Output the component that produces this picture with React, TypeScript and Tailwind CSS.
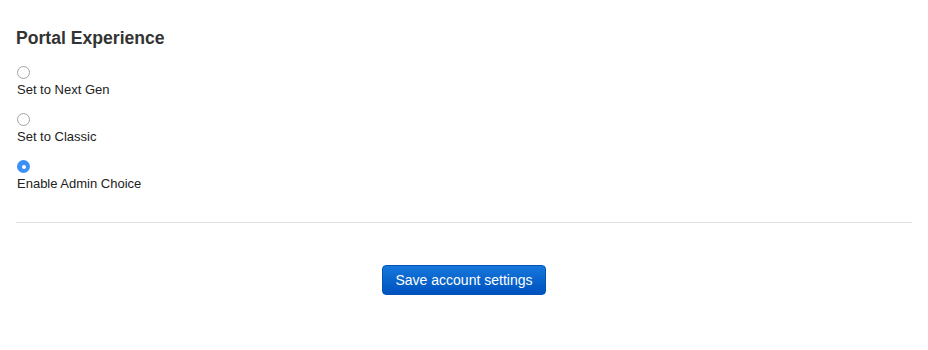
import React from "react";

function Radio({ checked }: { checked?: boolean }) {
  if (checked) {
    return (
      <div className="flex h-[13px] w-[13px] items-center justify-center rounded-full bg-[#3b8ff6]">
        <div className="h-[4px] w-[4px] rounded-full bg-white" />
      </div>
    );
  }
  return <div className="h-[13px] w-[13px] rounded-full border border-[#a3a3a3] bg-white" />;
}

const items = [
  { label: "Set to Next Gen", checked: false },
  { label: "Set to Classic", checked: false },
  { label: "Enable Admin Choice", checked: true },
];

export default function App() {
  return (
    <div
      className="h-[350px] w-[928px] bg-white px-4 text-[#333333]"
      style={{ fontFamily: '"Liberation Sans", Arial, sans-serif' }}
    >
      <h2 className="pt-[28px] text-[17.6px] font-bold leading-[20px] text-[#333333]">Portal Experience</h2>
      <div className="mt-[18px] flex flex-col pl-px">
        {items.map((it) => (
          <div key={it.label} className="mb-[15px] flex flex-col">
            <Radio checked={it.checked} />
            <div className="mt-[2px] text-[13px] leading-[17px] text-[#222222]">{it.label}</div>
          </div>
        ))}
      </div>
      <div className="mt-[15px] h-px bg-[#e3e3e3]" />
      <div className="mt-[42px] flex justify-center">
        <button className="h-[30px] w-[164px] rounded-[4px] border border-[#0452b5] bg-gradient-to-b from-[#1677dc] to-[#0052be] text-[14px] text-white">
          Save account settings
        </button>
      </div>
    </div>
  );
}
